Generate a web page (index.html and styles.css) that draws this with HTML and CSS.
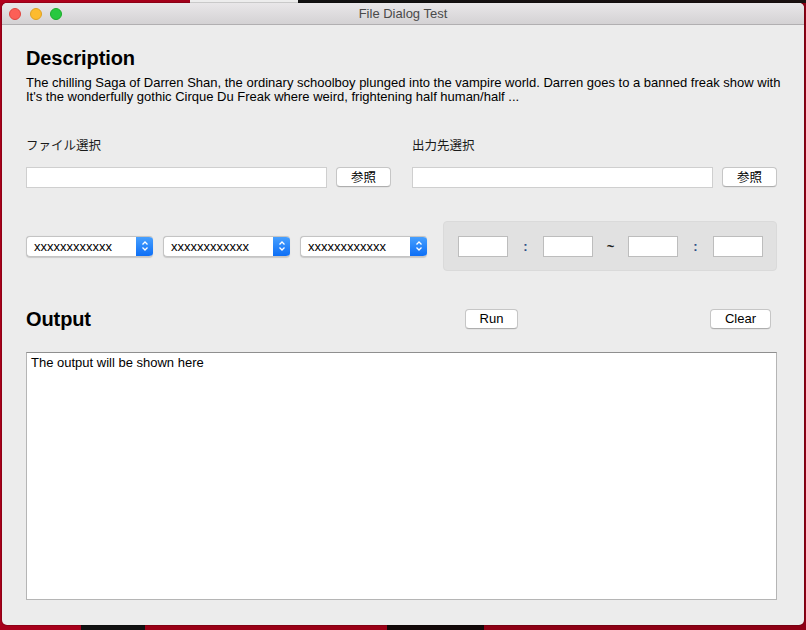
FILE: index.html
```html
<!DOCTYPE html>
<html lang="ja">
<head>
<meta charset="utf-8">
<title>File Dialog Test</title>
<link rel="stylesheet" href="styles.css">
</head>
<body>
<div class="window">
  <div class="titlebar">
    <div class="lights">
      <span class="light red"></span>
      <span class="light yellow"></span>
      <span class="light green"></span>
    </div>
    <div class="title">File Dialog Test</div>
  </div>
  <div class="content">
    <h1 class="heading">Description</h1>
    <p class="desc">The chilling Saga of Darren Shan, the ordinary schoolboy plunged into the vampire world. Darren goes to a banned freak show with<br>It's the wonderfully gothic Cirque Du Freak where weird, frightening half human/half ...</p>

    <div class="files">
      <div class="filecol">
        <div class="label">ファイル選択</div>
        <div class="filerow">
          <div class="field"></div>
          <div class="btn browse">参照</div>
        </div>
      </div>
      <div class="filecol">
        <div class="label">出力先選択</div>
        <div class="filerow">
          <div class="field"></div>
          <div class="btn browse">参照</div>
        </div>
      </div>
    </div>

    <div class="options">
      <div class="selects">
        <div class="select"><span class="seltext">xxxxxxxxxxxx</span><span class="arrow"><svg width="8" height="12" viewBox="0 0 8 12"><path d="M1.5 4.5 L4 2 L6.5 4.5 M1.5 7.5 L4 10 L6.5 7.5" fill="none" stroke="#fff" stroke-width="1.3"/></svg></span></div>
        <div class="select"><span class="seltext">xxxxxxxxxxxx</span><span class="arrow"><svg width="8" height="12" viewBox="0 0 8 12"><path d="M1.5 4.5 L4 2 L6.5 4.5 M1.5 7.5 L4 10 L6.5 7.5" fill="none" stroke="#fff" stroke-width="1.3"/></svg></span></div>
        <div class="select"><span class="seltext">xxxxxxxxxxxx</span><span class="arrow"><svg width="8" height="12" viewBox="0 0 8 12"><path d="M1.5 4.5 L4 2 L6.5 4.5 M1.5 7.5 L4 10 L6.5 7.5" fill="none" stroke="#fff" stroke-width="1.3"/></svg></span></div>
      </div>
      <div class="timepanel">
        <div class="tfield"></div>
        <span class="sep colon">:</span>
        <div class="tfield"></div>
        <span class="sep tilde">~</span>
        <div class="tfield"></div>
        <span class="sep colon">:</span>
        <div class="tfield"></div>
      </div>
    </div>

    <div class="outhead">
      <h1 class="heading">Output</h1>
      <div class="btn run">Run</div>
      <div class="btn clear">Clear</div>
    </div>

    <div class="output">The output will be shown here</div>
  </div>
</div>
</body>
</html>
```

FILE: styles.css
```css
html, body {
  margin: 0;
  padding: 0;
}
body {
  width: 806px;
  height: 630px;
  overflow: hidden;
  background:
    linear-gradient(90deg, #b3001d 0, #a10019 23.6%, #ededed 23.6%, #ededed 37%, #111 37%, #1a1010 100%) 0 0 / 100% 3px no-repeat,
    linear-gradient(90deg, #a8001b 0, #a8001b 10%, #111 10%, #111 18%, #9a0016 18%, #9a0016 48%, #120808 48%, #120808 60%, #8d0014 60%, #8d0014 100%);
  font-family: "Liberation Sans", Arial, "Noto Sans CJK JP", sans-serif;
  color: #000;
}
.window {
  margin: 3px 2px 0 2px;
  width: 802px;
  height: 622px;
  background: #ececec;
  border-radius: 5px;
  overflow: hidden;
  display: flex;
  flex-direction: column;
  box-shadow: 0 0 0 1px rgba(0,0,0,0.15);
}
.titlebar {
  height: 21px;
  flex: none;
  background: linear-gradient(#e9e7e9, #d4d2d4);
  border-bottom: 1px solid #b1afb1;
  position: relative;
  display: flex;
  align-items: center;
}
.lights {
  display: flex;
  gap: 8.5px;
  padding-left: 7px;
}
.light {
  width: 12px;
  height: 12px;
  border-radius: 50%;
  box-sizing: border-box;
  display: block;
}
.red { background: #fc5f57; border: 0.5px solid #e0443e; }
.yellow { background: #fdbb2e; border: 0.5px solid #dea123; }
.green { background: #28c840; border: 0.5px solid #1aab29; }
.title {
  position: absolute;
  left: 0;
  right: 0;
  top: 0;
  line-height: 21px;
  text-align: center;
  font-size: 13px;
  color: #4a4a4a;
  font-family: "Liberation Sans", Arial, sans-serif;
}
.content {
  padding: 21px 27px 0 24px;
  display: flex;
  flex-direction: column;
}
.heading {
  margin: 0;
  font-size: 20px;
  line-height: 24px;
  font-weight: bold;
  letter-spacing: -0.1px;
}
.desc {
  margin: 6px 0 0 0;
  font-size: 13px;
  line-height: 14px;
  white-space: nowrap;
}
.files {
  margin-top: 34px;
  display: grid;
  grid-template-columns: 365px 365px;
  column-gap: 21px;
}
.label {
  font-family: "Noto Sans CJK JP", sans-serif;
  font-size: 12.5px;
  line-height: 14px;
  color: #1a1a1a;
}
.filerow {
  margin-top: 15px;
  display: flex;
  align-items: flex-start;
  gap: 9px;
}
.field {
  flex: 1;
  height: 21px;
  box-sizing: border-box;
  background: #fff;
  border: 1px solid #cfcfcf;
}
.btn {
  box-sizing: border-box;
  height: 20px;
  background: #fff;
  border: 1px solid #c6c6c6;
  border-bottom-color: #aeaeae;
  border-radius: 4px;
  font-size: 13px;
  line-height: 18px;
  text-align: center;
  box-shadow: 0 0.5px 0.5px rgba(0,0,0,0.08);
}
.browse {
  width: 55px;
  font-family: "Noto Sans CJK JP", sans-serif;
  font-size: 12.5px;
}
.options {
  margin-top: 33px;
  display: flex;
  align-items: center;
  gap: 16px;
}
.selects {
  display: flex;
  gap: 10px;
}
.select {
  width: 127px;
  height: 21px;
  box-sizing: border-box;
  background: #fff;
  border: 1px solid #c4c4c4;
  border-right: none;
  border-radius: 4px;
  display: flex;
  align-items: center;
  overflow: hidden;
  box-shadow: 0 0.5px 1px rgba(0,0,0,0.15);
}
.seltext {
  flex: 1;
  padding-left: 7px;
  font-size: 13px;
  line-height: 19px;
  color: #000;
}
.arrow {
  width: 17px;
  height: 21px;
  margin-top: -1px;
  margin-bottom: -1px;
  background: linear-gradient(#4aa2ff, #0a6cf5);
  display: flex;
  align-items: center;
  justify-content: center;
}
.timepanel {
  width: 334px;
  height: 50px;
  box-sizing: border-box;
  background: #e1e1e1;
  border: 1px solid #dadada;
  border-radius: 4px;
  display: flex;
  align-items: center;
  padding-left: 14px;
}
.tfield {
  width: 50px;
  height: 21px;
  box-sizing: border-box;
  background: #fff;
  border: 1px solid #bdbdbd;
}
.sep {
  width: 35px;
  text-align: center;
  font-size: 13px;
  line-height: 21px;
}
.colon {
  color: #2d4f86;
  font-weight: bold;
}
.tilde {
  color: #222;
  font-weight: bold;
}
.outhead {
  margin-top: 36px;
  display: grid;
  grid-template-columns: 439px 53px 1fr;
  align-items: center;
}
.run {
  width: 53px;
}
.clear {
  width: 61px;
  justify-self: end;
  margin-right: 6px;
}
.output {
  margin-top: 21px;
  height: 248px;
  box-sizing: border-box;
  background: #fff;
  border: 1px solid #b5b5b5;
  border-top-color: #8f8f8f;
  padding: 2px 4px;
  font-size: 13px;
  line-height: 15px;
}
```
